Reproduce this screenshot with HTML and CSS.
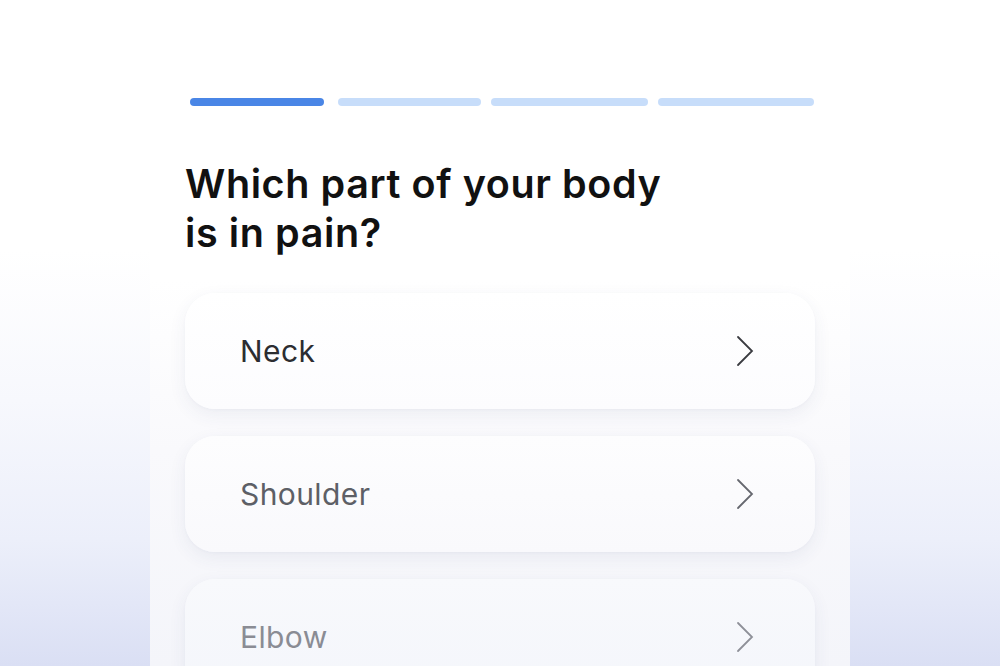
FILE: index.html
```html
<!DOCTYPE html>
<html lang="en">
<head>
<meta charset="utf-8">
<title>Which part of your body is in pain?</title>
<link rel="stylesheet" href="styles.css">
</head>
<body>
<div class="stage">
  <main class="panel">
    <div class="progress">
      <span class="seg seg-active seg-1"></span>
      <span class="seg seg-2"></span>
      <span class="seg seg-3"></span>
      <span class="seg seg-4"></span>
    </div>
    <h1 class="title">Which part of your body<br>is in pain?</h1>
    <ul class="options">
      <li class="option option-1"><span class="label">Neck</span>
        <svg class="chev" viewBox="0 0 18 32" width="18" height="32"><path d="M2 2 L16 16 L2 30" fill="none" stroke="currentColor" stroke-width="1.8" stroke-linecap="round" stroke-linejoin="miter"/></svg>
      </li>
      <li class="option option-2"><span class="label">Shoulder</span>
        <svg class="chev" viewBox="0 0 18 32" width="18" height="32"><path d="M2 2 L16 16 L2 30" fill="none" stroke="currentColor" stroke-width="1.8" stroke-linecap="round" stroke-linejoin="miter"/></svg>
      </li>
      <li class="option option-3"><span class="label">Elbow</span>
        <svg class="chev" viewBox="0 0 18 32" width="18" height="32"><path d="M2 2 L16 16 L2 30" fill="none" stroke="currentColor" stroke-width="1.8" stroke-linecap="round" stroke-linejoin="miter"/></svg>
      </li>
    </ul>
  </main>
</div>
</body>
</html>
```

FILE: styles.css
```css
html, body {
  margin: 0;
  padding: 0;
  height: 100%;
  overflow: hidden;
}
body {
  font-family: Inter, "Liberation Sans", sans-serif;
  background: linear-gradient(180deg, #ffffff 0px, #ffffff 250px, #f7f8fd 400px, #eceffa 540px, #dadff4 666px);
}
.stage {
  height: 666px;
  display: flex;
  justify-content: center;
}
.panel {
  width: 700px;
  height: 666px;
  box-sizing: border-box;
  padding: 98px 35px 0 35px;
  background: linear-gradient(180deg, #ffffff 0px, #ffffff 280px, #f9f9fc 450px, #f4f5fa 666px);
}
.progress {
  display: flex;
  gap: 12px;
  padding: 0 1px 0 5px;
}
.seg {
  height: 8px;
  border-radius: 4px;
  background: #c7ddfa;
}
.seg-1 { width: 134px; background: #4a86e6; margin-right: 2px; }
.seg-2 { width: 143px; }
.seg-3 { width: 157px; margin-left: -2px; }
.seg-4 { flex: 1; margin-left: -2px; }

.title {
  margin: 54px 0 0 0;
  font-size: 39.5px;
  line-height: 49px;
  font-weight: 600;
  color: #111111;
  letter-spacing: 0.6px;
}
.options {
  list-style: none;
  margin: 35px 0 0 0;
  padding: 0;
  display: flex;
  flex-direction: column;
  gap: 27px;
}
.option {
  height: 116px;
  border-radius: 30px;
  display: flex;
  align-items: center;
  justify-content: space-between;
  padding: 0 61px 0 55px;
  background: linear-gradient(180deg, #ffffff, #fcfcfe);
  box-shadow: 0 6px 18px rgba(60, 70, 120, 0.07), 0 1px 3px rgba(60, 70, 120, 0.03);
}
.label {
  font-size: 30px;
  font-weight: 400;
  letter-spacing: 0.4px;
}
.chev { display: block; }
.option-1 { color: #2c2d31; }
.option-2 { color: #5d5f66; background: linear-gradient(180deg, #fdfdfe, #f9f9fc); }
.option-3 { color: #8a8c94; background: linear-gradient(180deg, #f8f9fc, #f4f6fb); }
.option-1 .chev { color: #3a3b40; }
.option-2 .chev { color: #66686f; }
.option-3 .chev { color: #8e9098; }
```
